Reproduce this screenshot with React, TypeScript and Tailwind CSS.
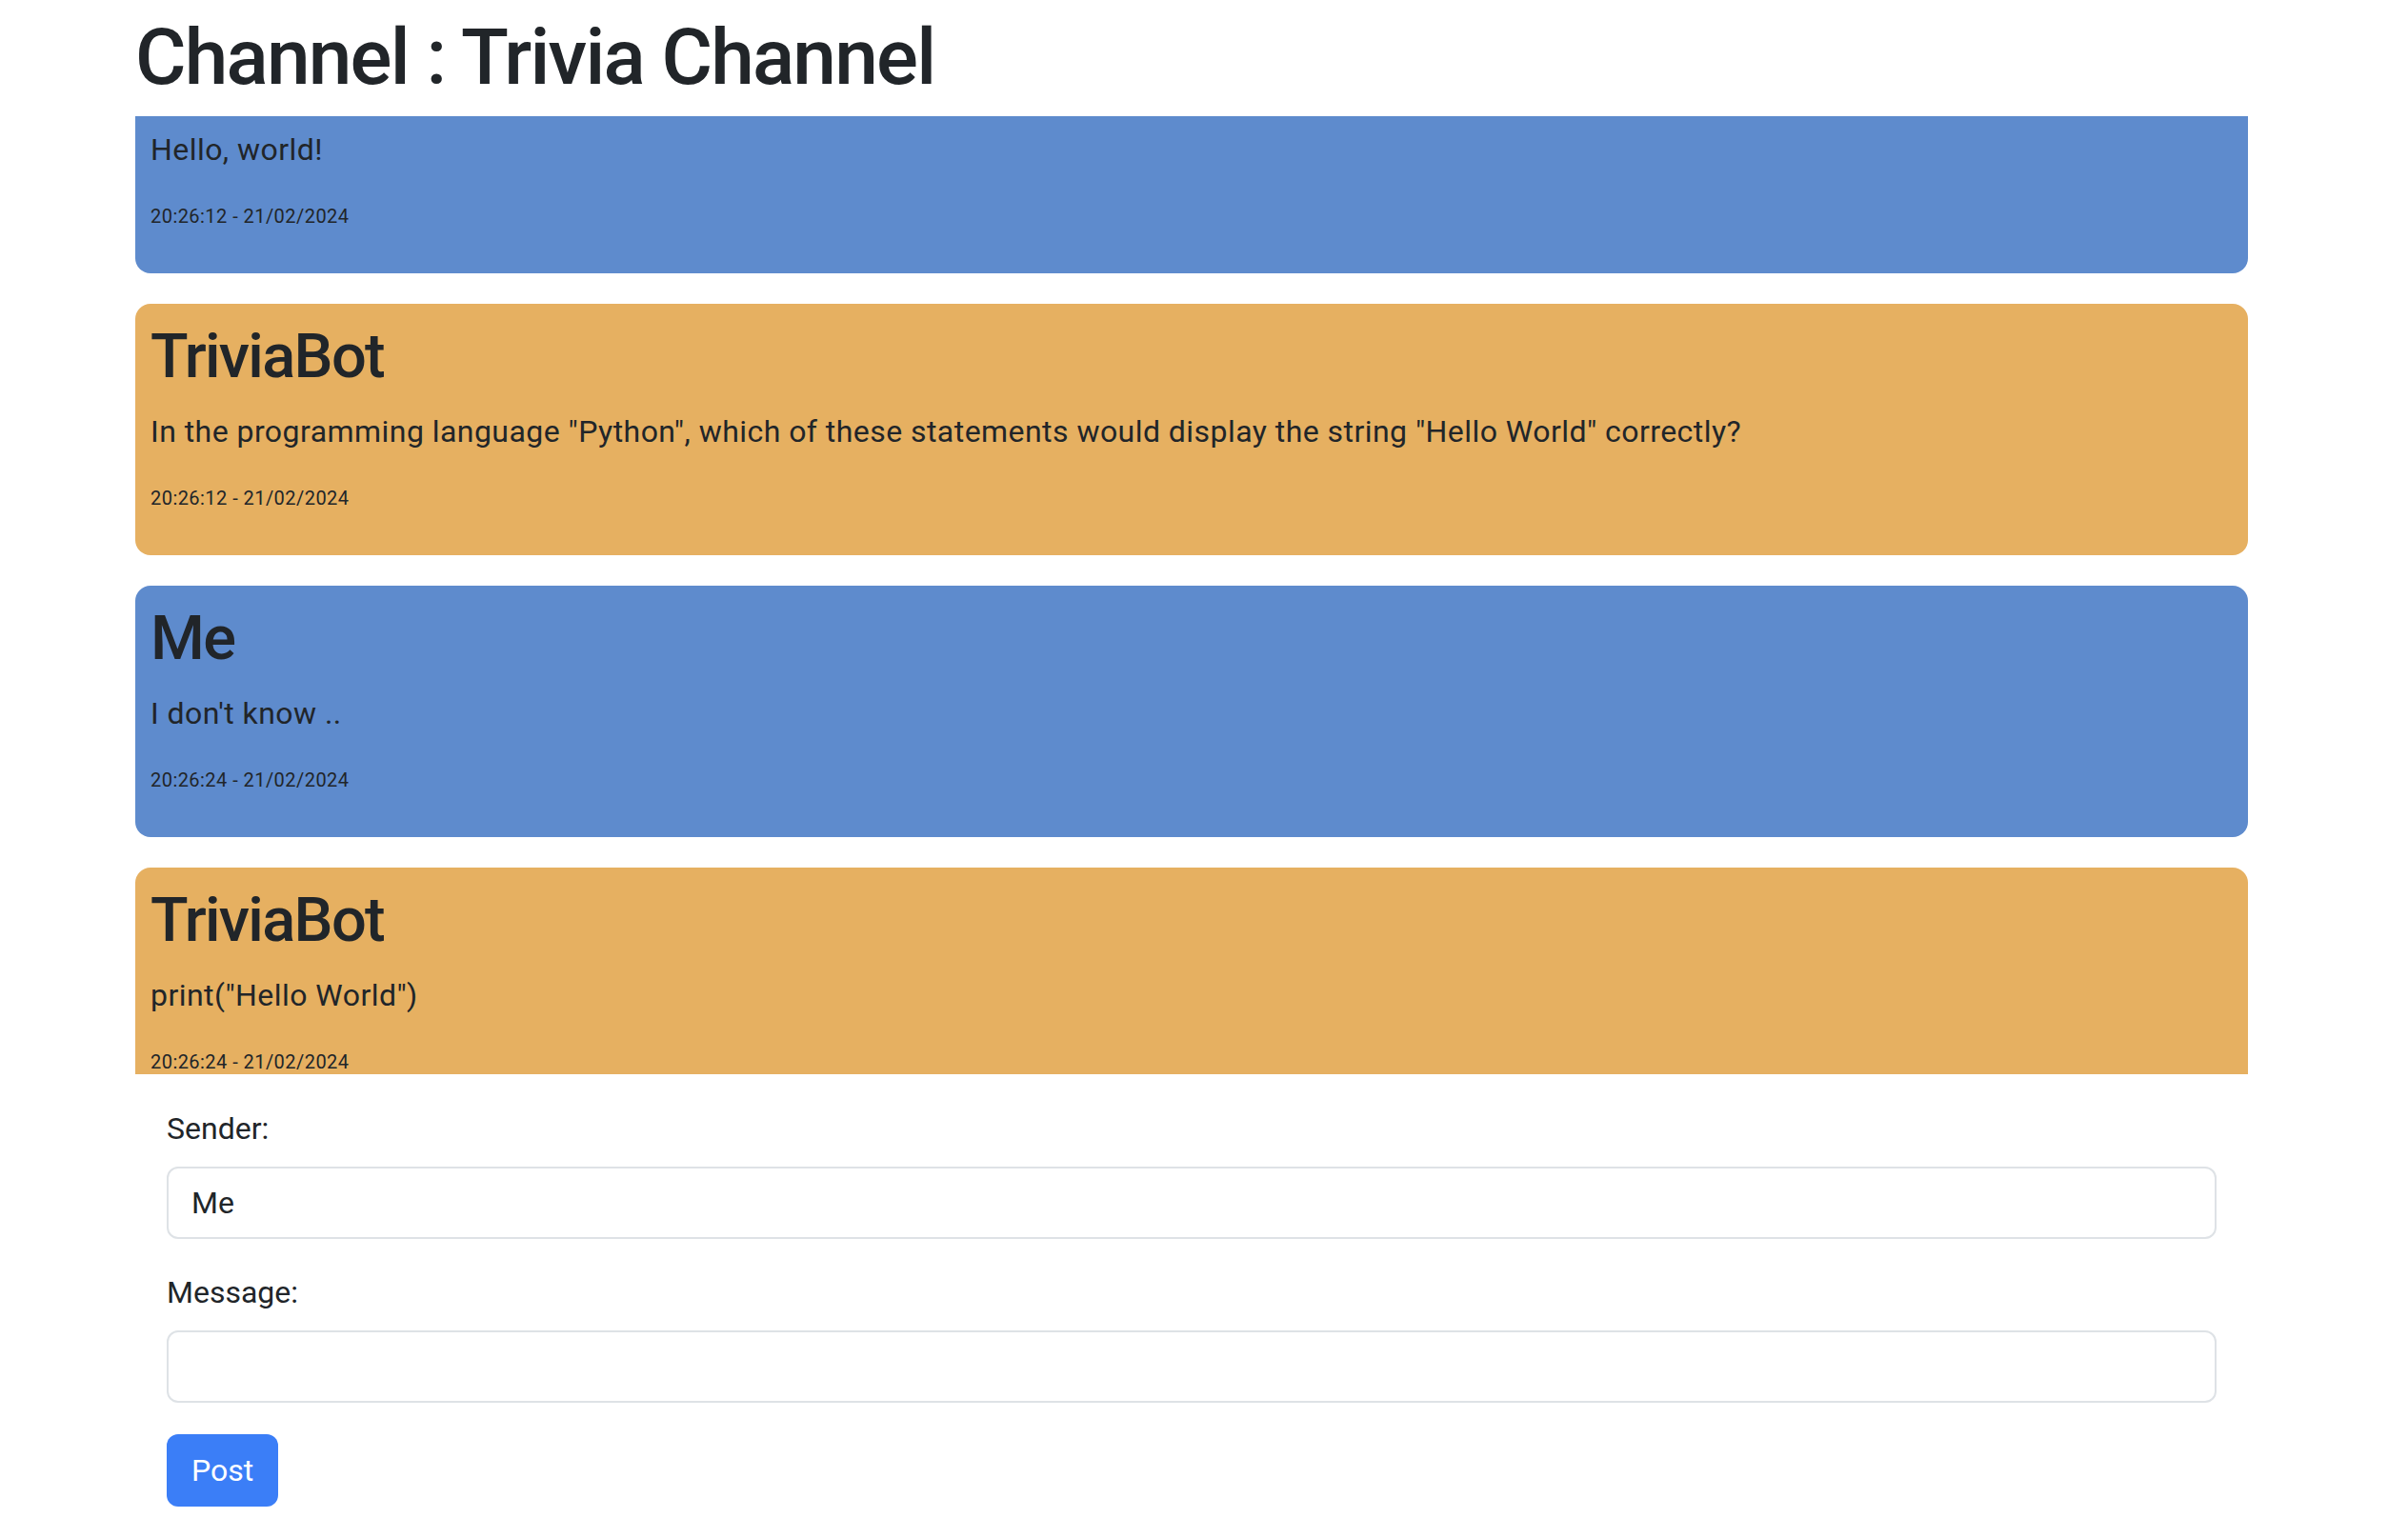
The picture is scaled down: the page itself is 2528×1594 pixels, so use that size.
import { useEffect, useRef, useState, type FormEvent } from 'react';

type Message = {
  sender: string;
  text: string;
  time: string;
};

const INITIAL: Message[] = [
  { sender: 'Me', text: 'Hello, world!', time: '20:26:12 - 21/02/2024' },
  {
    sender: 'TriviaBot',
    text: 'In the programming language "Python", which of these statements would display the string "Hello World" correctly?',
    time: '20:26:12 - 21/02/2024',
  },
  { sender: 'Me', text: "I don't know ..", time: '20:26:24 - 21/02/2024' },
  { sender: 'TriviaBot', text: 'print("Hello World")', time: '20:26:24 - 21/02/2024' },
];

function MessageCard({ msg }: { msg: Message }) {
  const mine = msg.sender === 'Me';
  return (
    <div className={`mb-[32px] rounded-[16px] p-[16px] ${mine ? 'bg-[#5e8bcd]' : 'bg-[#e6b061]'}`}>
      <h2 className="mb-[16px] text-[65px] font-medium leading-[78px] tracking-[-1.7px]">{msg.sender}</h2>
      <p className="mb-[32px] text-[32px] leading-[48px] tracking-[0.45px]">{msg.text}</p>
      <p className="mb-[30px] text-[20px] leading-[28px] tracking-[0.45px]">{msg.time}</p>
    </div>
  );
}

export default function App() {
  const [messages, setMessages] = useState<Message[]>(INITIAL);
  const [sender, setSender] = useState('Me');
  const [text, setText] = useState('');
  const listRef = useRef<HTMLDivElement>(null);

  // the chat list is shown scrolled a little past the first card's header
  useEffect(() => {
    if (listRef.current) listRef.current.scrollTop = 99;
  }, []);

  const onSubmit = (e: FormEvent) => {
    e.preventDefault();
    if (!text.trim()) return;
    setMessages((m) => [...m, { sender, text, time: new Date().toLocaleTimeString() }]);
    setText('');
  };

  return (
    <div className="min-h-screen bg-white pl-[142px] pr-[168px] text-[#212529] font-['Roboto','Liberation_Sans',sans-serif]">
      <h1 className="mt-[11px] mb-[13px] text-[82px] font-medium leading-[98px] tracking-[-1.8px]">
        Channel : Trivia Channel
      </h1>

      <div ref={listRef} className="h-[1006px] overflow-hidden">
        {messages.map((m, i) => (
          <MessageCard key={i} msg={m} />
        ))}
      </div>

      <form onSubmit={onSubmit} className="px-[33px] pt-[33px]">
        <label className="block">
          <span className="mb-[16px] block text-[32px] leading-[48px]">Sender:</span>
          <input
            value={sender}
            onChange={(e) => setSender(e.target.value)}
            className="mb-[32px] block h-[76px] w-full rounded-[12px] border-2 border-[#dee2e6] px-[24px] text-[32px] text-[#212529] outline-none"
          />
        </label>
        <label className="block">
          <span className="mb-[16px] block text-[32px] leading-[48px]">Message:</span>
          <input
            value={text}
            onChange={(e) => setText(e.target.value)}
            className="mb-[33px] block h-[76px] w-full rounded-[12px] border-2 border-[#dee2e6] px-[24px] text-[32px] text-[#212529] outline-none"
          />
        </label>
        <button
          type="submit"
          className="h-[76px] rounded-[12px] border-2 border-transparent bg-[#3b7ef7] px-[24px] text-[32px] leading-[48px] text-white"
        >
          Post
        </button>
      </form>
    </div>
  );
}
